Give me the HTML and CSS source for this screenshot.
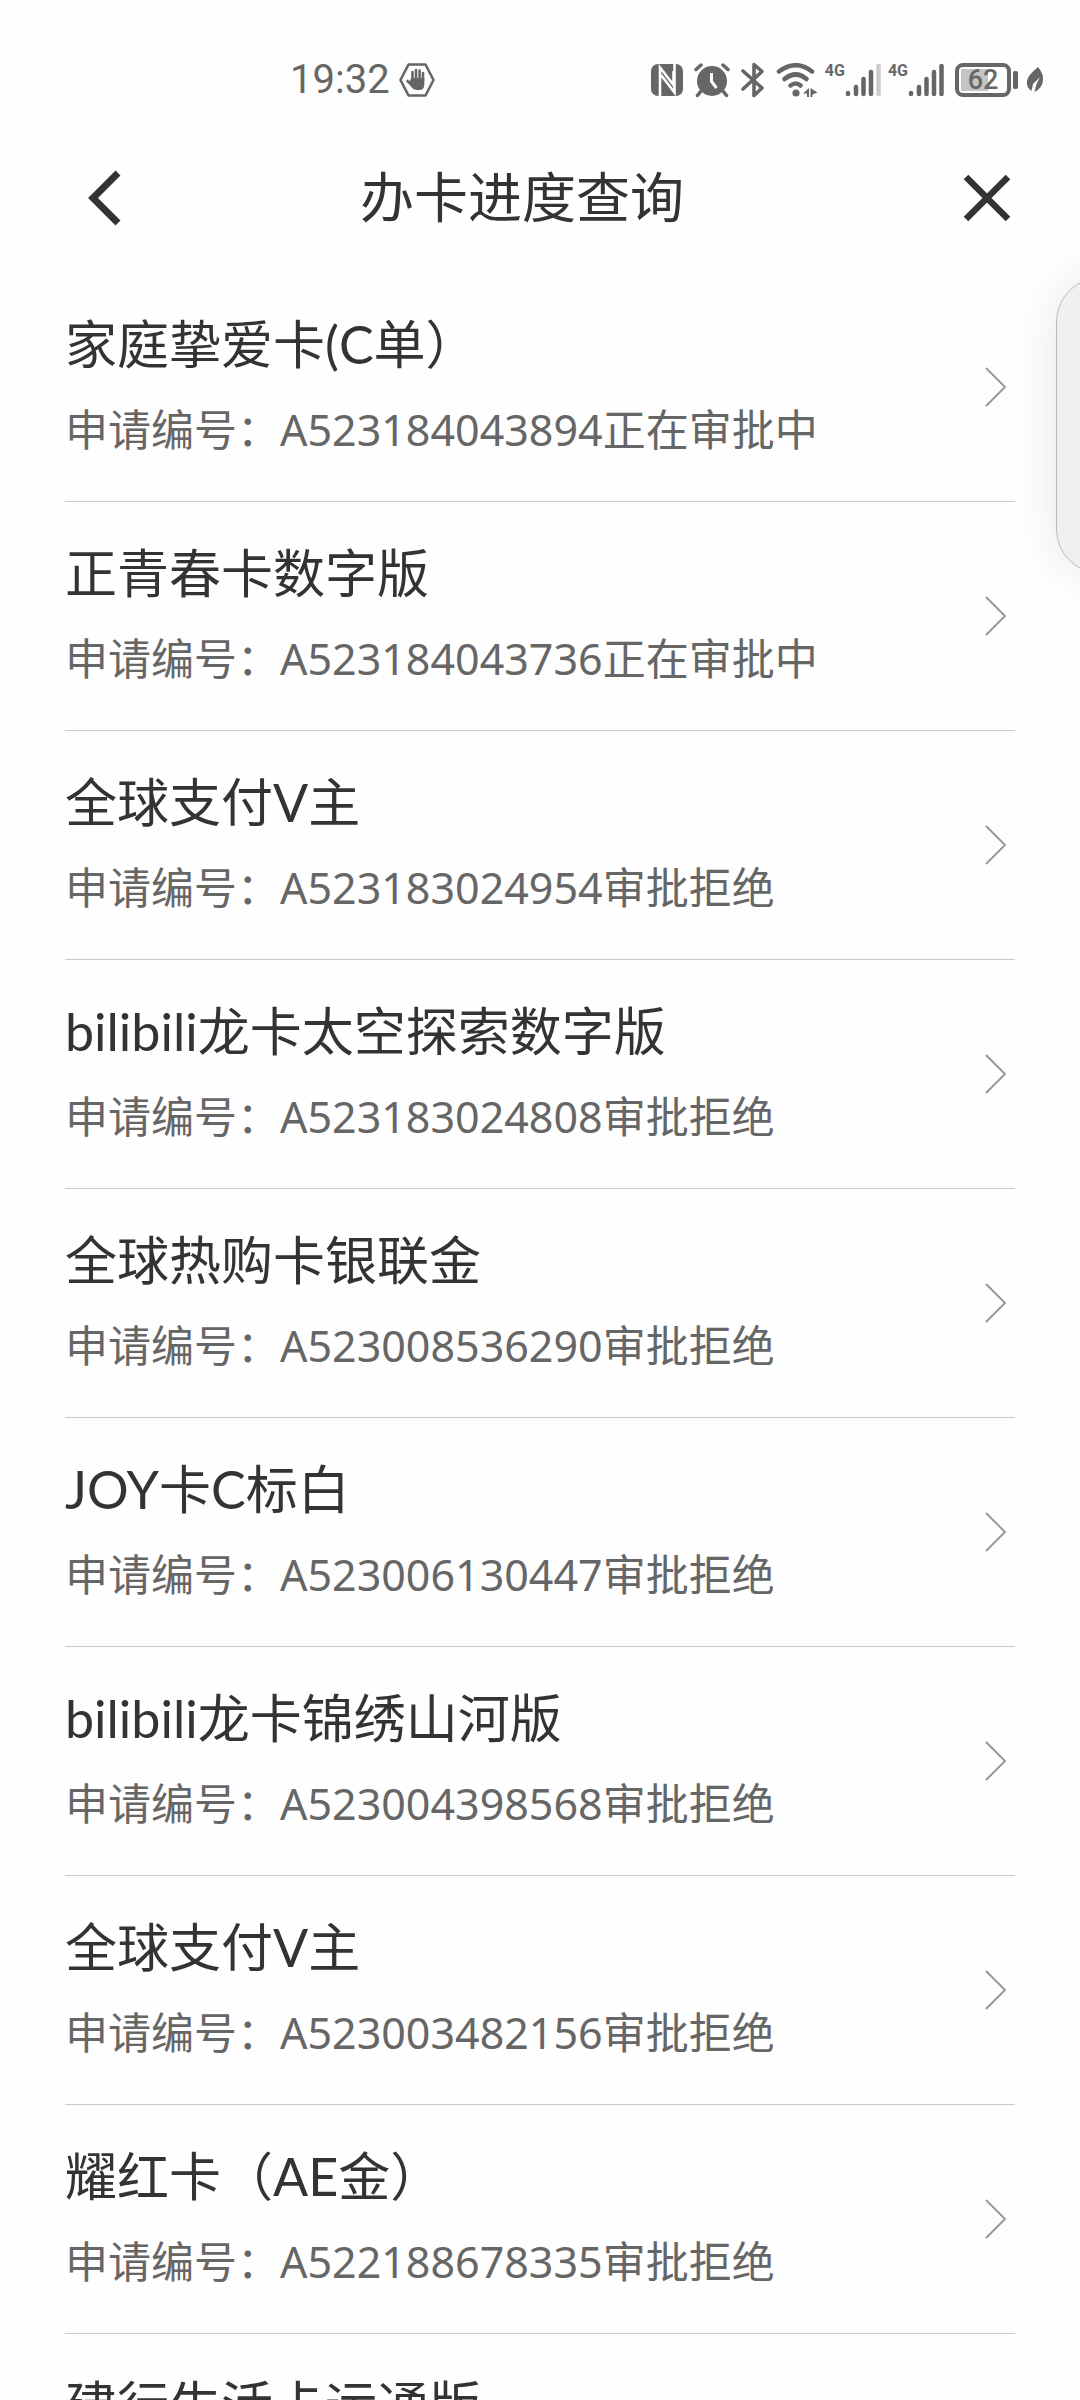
FILE: index.html
```html
<!DOCTYPE html>
<html lang="zh-CN">
<head>
<meta charset="utf-8">
<meta name="viewport" content="width=device-width">
<title>办卡进度查询</title>
<link rel="stylesheet" href="styles.css">
</head>
<body>
<div class="status">
  <div class="clock">
    <span>19:32</span>
    <svg width="36" height="34" viewBox="0 0 36 34"><path d="M9.500 1.500h17l8 15.500-8 15.500h-17L1.500 17z" fill="none" stroke="#666" stroke-width="2.600" stroke-linejoin="round"/><path d="M13.500 18V9M17 17V7M20.600 17V7.500M24 18v-8M13 22l-4.500-4" fill="none" stroke="#666" stroke-width="2.600" stroke-linecap="round"/><path d="M12.200 15h13.100v6.500q0 5.500-5 5.500h-3q-3 0-5-3l-4-5.500 2.500-.5z" fill="#666"/></svg>
  </div>
  <div class="signals">
    <svg width="32" height="32" viewBox="0 0 32 32"><rect width="32" height="32" rx="7" fill="#666"/><path d="M9 32V3.500L22.500 21V7M10 11l13.500 17.500V0" fill="none" stroke="#fefefe" stroke-width="2.600"/></svg>
    <svg width="36" height="34" viewBox="0 0 36 34"><circle cx="18" cy="18" r="15" fill="#666"/><path d="M2 6.500L7 2M34 6.500L29 2M7 28l-3.500 4.500M29 28l3.500 4.500" stroke="#666" stroke-width="3.500" stroke-linecap="round"/><path d="M17.500 10v8.500l5 6.500" fill="none" stroke="#fefefe" stroke-width="3"/></svg>
    <svg width="24" height="36" viewBox="0 0 24 36"><path d="M2 9l19 17-8 7.500V2.500l8 7L2 27" fill="none" stroke="#666" stroke-width="3.600" stroke-linecap="round" stroke-linejoin="round"/></svg>
    <svg width="42" height="34" viewBox="0 0 42 34"><g fill="none" stroke="#666" stroke-width="4.600" stroke-linecap="round"><path d="M3 8.500Q20-4 36 8.500"/><path d="M8.500 16Q20 7 30.500 16"/><path d="M14.500 22.500Q20 18.500 24.500 22.500"/></g><circle cx="20" cy="30" r="3.600" fill="#666"/><path d="M33 25v9h-2v-3.500L27 30.500zM34.500 25l7 4.500-5 2V34h-2z" fill="#666"/></svg>
    <div class="cell"><b>4G</b><svg width="36" height="34" viewBox="0 0 36 34" stroke="#666" stroke-width="4.500" stroke-linecap="round"><path d="M3 30v1M11 24v7M18.500 16v15M26 9v22"/><path d="M33.500 3v28" stroke="#ccc"/></svg></div>
    <div class="cell"><b>4G</b><svg width="36" height="34" viewBox="0 0 36 34" stroke="#666" stroke-width="4.500" stroke-linecap="round"><path d="M3 30v1M11 24v7M18.500 16v15M26 9v22M33.500 3v28"/></svg></div>
    <div class="battery"><span>62</span></div>
    <svg width="18" height="28" viewBox="0 0 18 28"><path d="M12 1q5.500 6.500 5 13-.5 8-8.500 12l2-8L14 11 7 18 5.500 25Q0 21 1 15 2 9 12 1z" fill="#666"/></svg>
  </div>
</div>
<header class="nav">
  <button class="icon-button" aria-label="返回"><svg width="34" height="56" viewBox="0 0 34 56"><path d="M31 3L6 28l25 25" fill="none" stroke="#333" stroke-width="7"/></svg></button>
  <h1>办卡进度查询</h1>
  <button class="icon-button" aria-label="关闭"><svg width="48" height="48" viewBox="0 0 48 48"><path d="M3 3l42 42M45 3L3 45" stroke="#333" stroke-width="6.500"/></svg></button>
</header>
<main>
  <ul class="list">
    <li><a class="row" href="#"><span class="text"><span class="name">家庭挚爱卡(C单）</span><span class="detail">申请编号：A523184043894正在审批中</span></span><svg class="chevron" viewBox="0 0 24 40"><path d="M2 1l19 19L2 39"/></svg></a></li>
    <li><a class="row" href="#"><span class="text"><span class="name">正青春卡数字版</span><span class="detail">申请编号：A523184043736正在审批中</span></span><svg class="chevron" viewBox="0 0 24 40"><path d="M2 1l19 19L2 39"/></svg></a></li>
    <li><a class="row" href="#"><span class="text"><span class="name">全球支付V主</span><span class="detail">申请编号：A523183024954审批拒绝</span></span><svg class="chevron" viewBox="0 0 24 40"><path d="M2 1l19 19L2 39"/></svg></a></li>
    <li><a class="row" href="#"><span class="text"><span class="name">bilibili龙卡太空探索数字版</span><span class="detail">申请编号：A523183024808审批拒绝</span></span><svg class="chevron" viewBox="0 0 24 40"><path d="M2 1l19 19L2 39"/></svg></a></li>
    <li><a class="row" href="#"><span class="text"><span class="name">全球热购卡银联金</span><span class="detail">申请编号：A523008536290审批拒绝</span></span><svg class="chevron" viewBox="0 0 24 40"><path d="M2 1l19 19L2 39"/></svg></a></li>
    <li><a class="row" href="#"><span class="text"><span class="name">JOY卡C标白</span><span class="detail">申请编号：A523006130447审批拒绝</span></span><svg class="chevron" viewBox="0 0 24 40"><path d="M2 1l19 19L2 39"/></svg></a></li>
    <li><a class="row" href="#"><span class="text"><span class="name">bilibili龙卡锦绣山河版</span><span class="detail">申请编号：A523004398568审批拒绝</span></span><svg class="chevron" viewBox="0 0 24 40"><path d="M2 1l19 19L2 39"/></svg></a></li>
    <li><a class="row" href="#"><span class="text"><span class="name">全球支付V主</span><span class="detail">申请编号：A523003482156审批拒绝</span></span><svg class="chevron" viewBox="0 0 24 40"><path d="M2 1l19 19L2 39"/></svg></a></li>
    <li><a class="row" href="#"><span class="text"><span class="name">耀红卡（AE金）</span><span class="detail">申请编号：A522188678335审批拒绝</span></span><svg class="chevron" viewBox="0 0 24 40"><path d="M2 1l19 19L2 39"/></svg></a></li>
    <li><a class="row" href="#"><span class="text"><span class="name">建行生活卡运通版</span></span></a></li>
  </ul>
</main>
<aside class="edge-panel"></aside>
</body>
</html>
```
FILE: styles.css
```css
* { box-sizing: border-box; }
body {
  margin: 0;
  height: 100vh;
  display: flex;
  flex-direction: column;
  overflow: hidden;
  position: relative;
  background: #fefefe;
  color: #333;
  font-family: Lato, "Noto Sans CJK SC", sans-serif;
}
svg { display: block; flex: none; }
.status {
  flex: none;
  display: flex;
  justify-content: space-between;
  align-items: center;
  height: 136px;
  padding: 24px 36px 0 290px;
  color: #666;
}
.clock { display: flex; align-items: center; gap: 9px; font: 400 40px/48px Roboto, sans-serif; }
.signals { display: flex; align-items: center; gap: 11px; }
.cell { display: flex; align-items: flex-start; margin-left: -4px; }
.cell b { font: 700 16px/16px Roboto, sans-serif; }
.battery {
  position: relative;
  width: 56px;
  height: 34px;
  margin-right: 4px;
  border: 4px solid #666;
  border-radius: 8px;
  padding: 2px;
  font: 500 27px/22px Roboto, sans-serif;
  text-align: center;
}
.battery span { display: block; background: linear-gradient(90deg, #c4c4c4 62%, transparent 62%); }
.battery::after {
  content: "";
  position: absolute;
  left: 54px;
  top: 4px;
  width: 5px;
  height: 18px;
  border-radius: 2px;
  background: #666;
}
.nav {
  flex: none;
  display: flex;
  align-items: center;
  height: 124px;
  margin-bottom: 13px;
  padding: 0 69px 0 87px;
}
.nav h1 {
  flex: 1;
  margin: 0;
  padding-right: 40px;
  font-size: 54px;
  line-height: 64px;
  font-weight: 400;
  text-align: center;
}
.icon-button { display: flex; padding: 0; border: 0; background: none; }
.list { margin: 0; padding: 0 65px; list-style: none; }
.row {
  display: flex;
  align-items: center;
  justify-content: space-between;
  padding-right: 7px;
  border-bottom: 1px solid #c8c8c8;
  color: inherit;
  text-decoration: none;
}
.text { display: flex; flex-direction: column; gap: 26px; padding: 39px 0 43px; white-space: nowrap; }
.name { font-size: 52px; line-height: 64px; }
.detail { font-family: "Noto Sans", "Noto Sans CJK SC", sans-serif; font-size: 43px; line-height: 56px; color: #666; }
.chevron { width: 24px; height: 40px; fill: none; stroke: #999; stroke-width: 2; }
.edge-panel {
  position: absolute;
  top: 277px;
  right: -44px;
  width: 68px;
  height: 297px;
  border: 1px solid #bbb;
  border-radius: 45px 0 0 45px;
  background: #f0f0f0;
  box-shadow: 0 0 48px rgba(0, 0, 0, 0.09);
}
```
